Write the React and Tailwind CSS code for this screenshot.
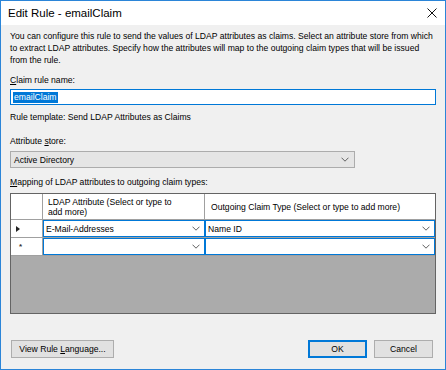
import React from "react";

function Chevron({ className = "" }) {
  return (
    <svg width="8" height="5" viewBox="0 0 8 5" className={className}>
      <path d="M0.5 0.7 L4 4.2 L7.5 0.7" fill="none" stroke="#606060" strokeWidth="1" />
    </svg>
  );
}

function ComboCell({ text, width }) {
  return (
    <div
      className="h-full border border-[#0078d7] bg-white flex items-center justify-between pl-[2px] pr-[4px]"
      style={{ width }}
    >
      <span>{text}</span>
      <Chevron />
    </div>
  );
}

export default function App() {
  return (
    <div
      className="w-[446px] h-[370px] border border-[#2b85d8] bg-[#f0f0f0] flex flex-col text-black text-[8.6px] leading-[12px] overflow-hidden"
      style={{ fontFamily: '"Liberation Sans", Arial, sans-serif' }}
    >
      {/* Title bar */}
      <div className="h-[24px] bg-white flex items-center justify-between pl-[7px] pr-[8px] shrink-0">
        <span className="text-[11.5px]">Edit Rule - emailClaim</span>
        <svg width="10" height="10" viewBox="0 0 10 10">
          <path d="M0.5 0.5 L9.5 9.5 M9.5 0.5 L0.5 9.5" stroke="#111" strokeWidth="1" />
        </svg>
      </div>

      <div className="flex flex-col px-[9px] flex-1">
        <p className="mt-[5px] whitespace-nowrap">
          You can configure this rule to send the values of LDAP attributes as claims. Select an attribute store from which
          <br />
          to extract LDAP attributes. Specify how the attributes will map to the outgoing claim types that will be issued
          <br />
          from the rule.
        </p>

        <div className="mt-[8px] h-[12px]">
          <span className="underline">C</span>laim rule name:
        </div>
        <div className="mt-[3px] h-[16px] border border-[#0078d7] bg-white flex items-center px-[2px]">
          <span className="bg-[#0078d7] text-white px-[1px] leading-[11px]">emailClaim</span>
        </div>

        <div className="mt-[6px] h-[12px]">Rule template: Send LDAP Attributes as Claims</div>

        <div className="mt-[12px] h-[12px]">
          Attribute <span className="underline">s</span>tore:
        </div>
        <div className="mt-[4px] h-[17px] w-[345px] border border-[#acacac] bg-[#e5e5e5] flex items-center justify-between pl-[3px] pr-[5px]">
          <span>Active Directory</span>
          <Chevron />
        </div>

        <div className="mt-[8px] h-[12px]">
          <span className="underline">M</span>apping of LDAP attributes to outgoing claim types:
        </div>

        {/* Grid */}
        <div className="mt-[5px] h-[121px] border border-[#646464] bg-[#ababab] flex flex-col">
          <div className="h-[26px] flex bg-white border-b border-[#a0a0a0]">
            <div className="w-[32px] border-r border-[#a0a0a0]" />
            <div className="w-[162px] border-r border-[#a0a0a0] pl-[5px] flex items-center leading-[10px]">
              LDAP Attribute (Select or type to
              <br />
              add more)
            </div>
            <div className="flex-1 pl-[6px] flex items-center">Outgoing Claim Type (Select or type to add more)</div>
          </div>
          <div className="h-[18px] flex bg-white border-b border-[#a0a0a0]">
            <div className="w-[32px] border-r border-[#a0a0a0] flex items-center pl-[5px]">
              <svg width="4" height="6" viewBox="0 0 4 6">
                <path d="M0 0 L4 3 L0 6 Z" fill="#222" />
              </svg>
            </div>
            <ComboCell text="E-Mail-Addresses" width="162px" />
            <div className="flex-1">
              <ComboCell text="Name ID" width="100%" />
            </div>
          </div>
          <div className="h-[18px] flex bg-white border-b border-[#a0a0a0]">
            <div className="w-[32px] border-r border-[#a0a0a0] flex items-center pl-[8px]">
              <span className="text-[8px] leading-[8px] font-bold text-[#333]">*</span>
            </div>
            <ComboCell text="" width="162px" />
            <div className="flex-1">
              <ComboCell text="" width="100%" />
            </div>
          </div>
        </div>

        {/* Buttons */}
        <div className="mt-[26px] flex items-center">
          <button className="ml-[1px] h-[18px] w-[103px] border border-[#adadad] bg-[#e1e1e1] text-[8.6px]">
            View Rule <span className="underline">L</span>anguage...
          </button>
          <div className="flex-1" />
          <button className="h-[18px] w-[59px] border-2 border-[#0078d7] bg-[#e1e1e1] text-[8.6px]">OK</button>
          <button className="ml-[7px] mr-[3px] h-[18px] w-[59px] border border-[#adadad] bg-[#e1e1e1] text-[8.6px]">
            Cancel
          </button>
        </div>
      </div>
    </div>
  );
}
